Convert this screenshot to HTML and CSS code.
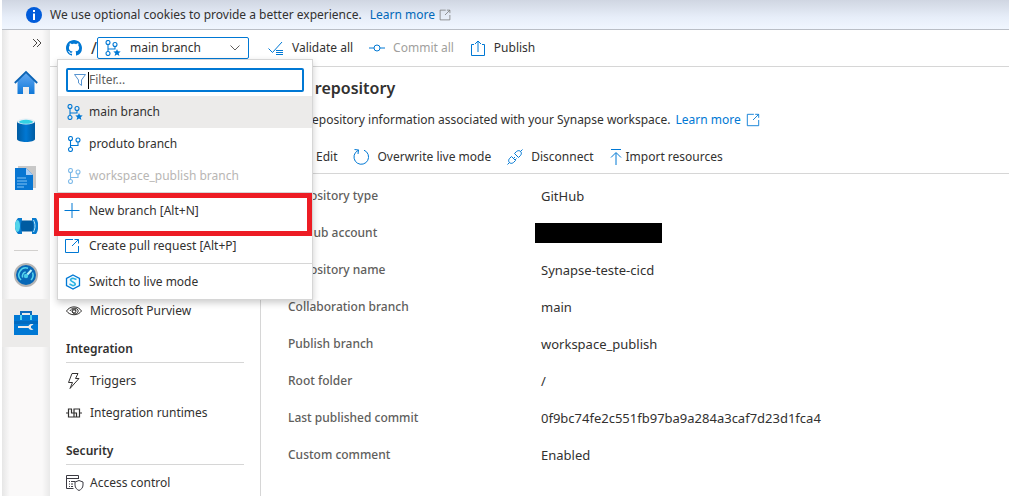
FILE: index.html
```html
<!DOCTYPE html>
<html lang="en">
<head>
<meta charset="utf-8">
<title>Git repository - Synapse workspace</title>
<link rel="stylesheet" href="styles.css">
</head>
<body>
<svg class="defs" aria-hidden="true">
  <defs>
    <linearGradient id="blue" x1="0" y1="0" x2="0" y2="1"><stop offset="0" stop-color="#64a9f2"/><stop offset="1" stop-color="#0f78d8"/></linearGradient>
    <linearGradient id="can" x1="0" y1="0" x2="1" y2="0"><stop offset="0" stop-color="#005ba1"/><stop offset=".5" stop-color="#0078d4"/><stop offset="1" stop-color="#005ba1"/></linearGradient>
    <symbol id="branch" viewBox="0 0 16 16"><g fill="none" stroke="currentColor" stroke-width="1.1"><circle cx="3.500" cy="2.500" r="2"/><circle cx="3.500" cy="13.500" r="2"/><circle cx="11" cy="4" r="2"/><path d="M3.500 4.500v7M11 6v3.500H3.500"/></g></symbol>
    <symbol id="branch-star" viewBox="0 0 16 16"><g fill="none" stroke="currentColor" stroke-width="1.1"><circle cx="3" cy="2.500" r="2"/><circle cx="3" cy="13.500" r="2"/><circle cx="10" cy="4.500" r="2"/><path d="M3 4.500v7M10 6.500v2.500H3"/></g><path fill="currentColor" d="M12 9l1 2.300 2.700.2-2 1.700.7 2.700-2.400-1.400-2.400 1.400.7-2.700-2-1.700 2.700-.2z"/></symbol>
    <symbol id="external" viewBox="0 0 16 16"><g fill="none" stroke="currentColor"><path d="M9 1.500H1.500v13h13V8M8 8l6.500-6.500M10.500 1.500h4v4"/></g></symbol>
  </defs>
</svg>

<div class="banner">
  <svg class="info" viewBox="0 0 16 16"><circle cx="8" cy="8" r="8" fill="#015cda"/><path d="M7 3h2v2H7zM7 6.500h2V13H7z" fill="#fff"/></svg>
  <span>We use optional cookies to provide a better experience.</span>
  <a class="link" href="#cookies">Learn more</a>
  <svg class="banner-external" viewBox="0 0 16 16"><use href="#external"/></svg>
</div>

<div class="app">
  <nav class="rail" aria-label="Hubs">
    <button class="expand" aria-label="Expand"><svg viewBox="0 0 10 10"><path d="M1 1l4 4-4 4M5 1l4 4-4 4" fill="none" stroke="#484644"/></svg></button>
    <button class="hub" aria-label="Home"><svg viewBox="0 0 24 24"><path d="M3.500 11L12 3l8.500 8v13h-17z" fill="url(#blue)"/><path d="M9 17h6v7H9z" fill="#eee"/><path d="M.8 13L12 2l11.200 11" fill="none" stroke="#0a63b5" stroke-width="1.800"/></svg></button>
    <button class="hub" aria-label="Data"><svg viewBox="0 0 24 24"><path d="M3 3v18c0 4 18 4 18 0V3z" fill="url(#can)"/><ellipse cx="12" cy="3.500" rx="9" ry="3" fill="#e3eef5"/><ellipse cx="12" cy="3.800" rx="7" ry="2" fill="#32d1e4"/></svg></button>
    <button class="hub" aria-label="Develop"><svg viewBox="0 0 24 24"><path d="M4 0h18v22H4z" fill="#c8c8c8"/><path d="M1 2h11l7 7v15H1z" fill="#0876d2"/><path d="M12 2l7 7h-7z" fill="#a9cdf5"/><path d="M3 12h9M3 15h10M3 18h10M3 21h7" stroke="#83c4f4" stroke-width="1.200"/></svg></button>
    <button class="hub" aria-label="Integrate"><svg viewBox="0 0 24 24"><path d="M6 6.500h14v11H6z" fill="#005ba1"/><path d="M4 4h4v2.500C6.500 9 6.500 15 8 17.500V20H4C0 16 0 8 4 4z" fill="#087bce"/><ellipse cx="3.500" cy="12" rx="2.500" ry="6" fill="#54d5eb"/><path d="M18 4h4c3 4 3 12 0 16h-4v-2.500c2-3 2-8 0-11z" fill="#087bce"/><path d="M19.500 6c2 4 2 8 0 12" fill="none" stroke="#b5e4f7" stroke-width="1"/></svg></button>
    <hr class="rail-line">
    <button class="hub" aria-label="Monitor"><svg viewBox="0 0 24 24"><circle cx="12" cy="12" r="11" fill="#0868b7" stroke="#b5b5b5" stroke-width="2"/><path d="M7 17A7 7 0 0114 5.300M18.500 9.500a7 7 0 01-1.500 7.500M8.700 14.500a4 4 0 013-5.500" fill="none" stroke="#55d4ed" stroke-width="1.500"/><path d="M12 13l5.500-6" stroke="#bff5fc" stroke-width="2"/><circle cx="12" cy="13" r="2.200" fill="#48cde8"/></svg></button>
    <button class="hub selected" aria-label="Manage" aria-current="page"><svg viewBox="0 0 24 24"><path d="M7 5V1h10v4" fill="none" stroke="#0f6cbd" stroke-width="2"/><path d="M0 4h24v20H0z" fill="#0078d4"/><path d="M0 10h24v3H0z" fill="#006ac0"/><path d="M6 4h2v5H6zM16 4h2v5h-2z" fill="#55d4ed"/><path d="M4 15h10.500c1-2 3.500-2.500 5-1.500L17 15v2l2.500 1.500c-2 1-4 .5-5-1.500H4z" fill="#ecebea"/></svg></button>
  </nav>

  <div class="workspace">
    <header class="toolbar">
      <svg class="github" viewBox="0 0 16 16" aria-label="GitHub"><path fill="#0078d4" d="M8 0C3.580 0 0 3.580 0 8c0 3.540 2.290 6.530 5.470 7.590.4.070.55-.17.55-.38 0-.19-.01-.82-.01-1.490-2.010.37-2.530-.49-2.690-.94-.09-.23-.48-.94-.82-1.130-.28-.15-.68-.52-.01-.53.63-.01 1.080.58 1.230.82.72 1.210 1.870.87 2.330.66.07-.52.28-.87.51-1.070-1.780-.2-3.640-.89-3.640-3.950 0-.87.31-1.590.82-2.150-.08-.2-.36-1.020.08-2.120 0 0 .67-.21 2.200.82.64-.18 1.320-.27 2-.27s1.360.09 2 .27c1.530-1.040 2.200-.82 2.200-.82.44 1.100.16 1.920.08 2.120.51.56.82 1.270.82 2.150 0 3.070-1.870 3.750-3.650 3.950.29.25.54.73.54 1.480 0 1.070-.01 1.930-.01 2.200 0 .21.15.46.55.38A8.010 8.010 0 0016 8c0-4.420-3.580-8-8-8z"/></svg>
      <span class="slash">/</span>
      <div class="picker">
        <svg class="icon"><use href="#branch-star"/></svg>
        <select aria-label="Branch"><option>main branch</option></select>
        <svg class="chevron" viewBox="0 0 10 6"><path d="M.5.5L5 5 9.500.5" fill="none" stroke="#605e5c"/></svg>
      </div>
      <button class="command validate"><svg class="icon" viewBox="0 0 16 16"><path d="M.5 8.500l4 4L14 2M8 10.500h7M8 12.500h7M8 14.500h7" fill="none" stroke="#0078d4"/></svg>Validate all</button>
      <button class="command" disabled><svg class="icon" viewBox="0 0 16 16"><path d="M0 8h5M11 8h5" stroke="#0078d4"/><circle cx="8" cy="8" r="3" fill="none" stroke="#0078d4"/></svg>Commit all</button>
      <button class="command"><svg class="icon" viewBox="0 0 16 16"><path d="M4 4.500H1.500v11h13v-11H12M8 12V1M5 4l3-3 3 3" fill="none" stroke="#0078d4"/></svg>Publish</button>
    </header>

    <div class="body">
      <nav class="sidebar" aria-label="Manage">
        <a class="side-item" href="#purview"><svg class="icon" viewBox="0 0 16 16"><g fill="none" stroke="#323130"><path d="M.5 8C4 2.500 12 2.500 15.500 8 12 13 4 13 .5 8z"/><path d="M4 8c1-3 6-4 8-1 1 3-3 5-5 3-2-3 2-4 3-2"/><circle cx="8" cy="8" r="2"/></g></svg>Microsoft Purview</a>
        <h2>Integration</h2>
        <a class="side-item" href="#triggers"><svg class="icon" viewBox="0 0 16 16"><path d="M6 .5h6L9.500 5.500H13L4 15.500l2.500-6H2.500z" fill="none" stroke="#323130"/></svg>Triggers</a>
        <a class="side-item" href="#runtimes"><svg class="icon" viewBox="0 0 16 16"><path d="M0 8h2.500M13.500 8H16M6 4H2.500v8H8V8H5.500V4M8 12h5.500V4H8v4h2.500v4M8 4v3" fill="none" stroke="#323130" stroke-width="1.200"/></svg>Integration runtimes</a>
        <h2>Security</h2>
        <a class="side-item" href="#access"><svg class="icon access" viewBox="0 0 18 16"><path d="M7.500 13.500H.5V.5h12V4M.5 3.500h12M3 6.500h1M5 6.500h4M3 9h1M5 9h2M3 11.500h1M5 11.500h2M13 5.500l4 1.500v3c0 3-2 4.500-4 5.500-2-1-4-2.500-4-5.500V7z" fill="none" stroke="#3b3a42"/></svg>Access control</a>
      </nav>

      <main class="content">
        <h1>Git repository</h1>
        <p class="intro">Git repository information associated with your Synapse workspace. <a class="link" href="#learn">Learn more</a><svg class="intro-external" viewBox="0 0 16 16"><use href="#external"/></svg></p>
        <div class="actions">
          <button class="command edit"><svg class="icon" viewBox="0 0 16 16"><path d="M1 15l1-4L12 1l3 3L5 14z" fill="none" stroke="#0078d4"/></svg>Edit</button>
          <button class="command"><svg class="icon" viewBox="0 0 16 16"><path d="M11 1.200A7.300 7.300 0 112.500 3.500M1.500.5l4 .5-.5 4M5.500 1L2.500 3.500" fill="none" stroke="#0078d4"/></svg>Overwrite live mode</button>
          <button class="command"><svg class="icon" viewBox="0 0 16 16"><g fill="none" stroke="#0078d4"><path d="M.5 15.500L2.500 13.500M13.500 2.500l2-2M6.500 9.500L8 8M8 11l1.500-1.500"/><path d="M4.500 7.500l4 4-2 2c-3 2.500-6.500-1-4-4zM11.500 8.500l-4-4 2-2c3-2.500 6.500 1 4 4z"/></g></svg>Disconnect</button>
          <button class="command import"><svg class="icon" viewBox="0 0 12 16"><path d="M1 .5h10M6 16V4M1 8.500L6 3.500l5 5" fill="none" stroke="#0078d4"/></svg>Import resources</button>
        </div>
        <table class="details">
          <tr><th scope="row">Repository type</th><td>GitHub</td></tr>
          <tr><th scope="row">GitHub account</th><td><span class="redacted"></span></td></tr>
          <tr><th scope="row">Repository name</th><td>Synapse-teste-cicd</td></tr>
          <tr><th scope="row">Collaboration branch</th><td>main</td></tr>
          <tr><th scope="row">Publish branch</th><td>workspace_publish</td></tr>
          <tr><th scope="row">Root folder</th><td>/</td></tr>
          <tr><th scope="row">Last published commit</th><td>0f9bc74fe2c551fb97ba9a284a3caf7d23d1fca4</td></tr>
          <tr><th scope="row">Custom comment</th><td>Enabled</td></tr>
        </table>
      </main>
    </div>

    <div class="menu">
      <div class="filter">
        <svg viewBox="0 0 12 12"><path d="M.5.5h11L7.500 6v5.500L4.500 9V6z" fill="none" stroke="#5793cf"/></svg>
        <span class="caret"></span>
        <input type="text" placeholder="Filter..." aria-label="Filter branches">
      </div>
      <button class="menu-item current"><svg class="icon"><use href="#branch-star"/></svg>main branch</button>
      <button class="menu-item"><svg class="icon"><use href="#branch"/></svg>produto branch</button>
      <button class="menu-item" disabled><svg class="icon"><use href="#branch"/></svg>workspace_publish branch</button>
      <div class="menu-group">
        <button class="menu-item action"><svg class="icon" viewBox="0 0 16 16"><path d="M.5 7.500h15M8 0v15" stroke="#0078d4"/></svg>New branch [Alt+N]</button>
        <button class="menu-item action"><svg class="icon" viewBox="0 0 16 16"><use href="#external"/></svg>Create pull request [Alt+P]</button>
      </div>
      <div class="menu-group">
        <button class="menu-item action live"><svg class="icon" viewBox="0 0 16 16"><path d="M8 1l6.500 3.500v7L8 15l-6.500-3.500v-7z" fill="#f4fbff" stroke="#0078d4" stroke-width="1.300"/><path d="M11.500 5.500L8 4.300C4 5 5.500 7 8 8s3.500 3 0 3.700L4.500 10" fill="none" stroke="#2bb3e3" stroke-width="1.600"/></svg>Switch to live mode</button>
      </div>
      <div class="highlight"></div>
    </div>
  </div>
</div>
</body>
</html>
```
FILE: styles.css
```css
* { box-sizing: border-box; }

body {
  margin: 0;
  min-height: 100vh;
  display: flex;
  flex-direction: column;
  overflow: hidden;
  background: #fff;
  color: #323130;
  font: 12px/16px "Noto Sans", "Open Sans", sans-serif;
}

button, input, select {
  font: inherit;
  color: inherit;
  background: none;
  border: 0;
  padding: 0;
  margin: 0;
}

a { color: inherit; text-decoration: none; }
svg { flex: none; }
.defs { position: absolute; width: 0; height: 0; }
.icon { width: 16px; height: 16px; color: #0078d4; }
.link { color: #0068b8; }

.banner {
  display: flex;
  align-items: center;
  height: 30px;
  margin-left: 2px;
  padding: 0 24px;
  border-bottom: 1px solid #b9bec6;
  background: linear-gradient(#d0d6e2, #e7eef9 60%, #f0f6ff);
}
.info { width: 16px; height: 16px; margin-right: 8px; }
.banner .link { margin-left: 8px; }
.banner-external { width: 12px; height: 12px; margin-left: 4px; color: #767676; }

.app { display: flex; flex: 1; min-height: 0; }

.rail {
  display: flex;
  flex-direction: column;
  width: 48px;
  margin-left: 2px;
  background: linear-gradient(90deg, #e6e6e6, #faf9f9 8px, #faf9f9 40px, #e9e9e9);
}
.expand { display: flex; align-self: flex-end; padding: 8px; }
.expand svg { width: 10px; height: 10px; }
.hub { display: grid; place-items: center; height: 48px; }
.hub svg { width: 24px; height: 24px; }
.expand + .hub { margin-top: 2px; }
.selected { background: #ecebea; }
.rail-line { width: 24px; margin: 0 auto; border: 0; border-top: 1px solid #d2d0ce; }

.workspace { position: relative; flex: 1; display: flex; flex-direction: column; min-width: 0; }

.toolbar {
  display: flex;
  align-items: center;
  height: 37px;
  padding-left: 16px;
  border-bottom: 1px solid #d6d6d6;
}
.github { width: 16px; height: 16px; }
.slash { margin-left: 9px; font-size: 16px; }
.picker {
  display: flex;
  align-items: center;
  width: 152px;
  height: 22px;
  padding: 0 8px 0 7px;
  border: 1px solid #0078d4;
  border-radius: 2px;
}
.picker select { flex: 1; appearance: none; padding-left: 9px; outline: 0; }
.chevron { width: 10px; height: 6px; }
.command { display: flex; align-items: center; gap: 8px; white-space: nowrap; }
.command:disabled { color: #a19f9d; }
.toolbar .command { margin-right: 16px; }
.toolbar .validate { margin-left: 19px; }

.body { display: flex; flex: 1; min-height: 0; }

.sidebar {
  width: 211px;
  padding: 228px 16px 0;
  border-right: 1px solid #d6d6d6;
}
.side-item { display: flex; align-items: center; gap: 8px; height: 32px; }
.access { width: 18px; margin-right: -2px; }
.sidebar h2 {
  margin: 12px 0 2px;
  padding-bottom: 3px;
  border-bottom: 1px solid #d6d6d6;
  font-size: 12px;
  line-height: 20px;
  font-weight: 600;
}

.content { flex: 1; padding-left: 27px; }
.content h1 { margin: 9px 0 0; font-size: 16px; line-height: 24px; font-weight: 600; }
.intro { display: flex; align-items: center; margin: 12px 0; white-space: nowrap; }
.intro .link { margin-left: 5px; color: #0078d4; }
.intro-external { width: 14px; height: 14px; margin-left: 5px; color: #0078d4; }
.actions {
  display: flex;
  gap: 16px;
  height: 34px;
  align-items: center;
  border-bottom: 1px solid #d6d6d6;
}
.actions .edit { padding-left: 4px; }
.actions .import { gap: 4px; }
.actions .import .icon { width: 12px; }

.details { margin-top: 3px; border-spacing: 0; }
.details th, .details td { height: 37px; padding: 0; text-align: left; }
.details th { width: 253px; font-weight: 500; color: #605e5c; }
.details td { font-size: 13px; }
.redacted { display: block; width: 127px; height: 20px; margin-left: -6px; background: #000; }

.menu {
  position: absolute;
  top: 29px;
  left: 7px;
  width: 256px;
  border: 1px solid #d6d6d6;
  background: #fff;
  box-shadow: 0 3px 7px #0003;
}
.filter {
  display: flex;
  align-items: center;
  height: 24px;
  margin: 8px 8px 4px;
  padding-left: 6px;
  border: 2px solid #0078d4;
  border-radius: 2px;
}
.filter svg { width: 12px; height: 12px; }
.filter input { flex: 1; min-width: 0; outline: 0; }
.filter input::placeholder { color: #605e5c; opacity: 1; }
.caret { width: 1px; height: 17px; margin-left: 2px; background: #000; }
.menu-item {
  display: flex;
  align-items: center;
  gap: 6px;
  width: 100%;
  height: 32px;
  padding-left: 9px;
  text-align: left;
}
.menu-item:disabled { color: #b8b6b4; }
.menu-item:disabled .icon { opacity: .5; }
.current { background: #ecebea; }
.menu-group { border-top: 1px solid #d6d6d6; }
.action { height: 35px; gap: 9px; padding-left: 6px; }
.live { gap: 8px; padding-left: 7px; }
.highlight {
  position: absolute;
  top: 133px;
  left: -4px;
  width: 258px;
  height: 43px;
  border: 5px solid #ed1c24;
  pointer-events: none;
}
```
